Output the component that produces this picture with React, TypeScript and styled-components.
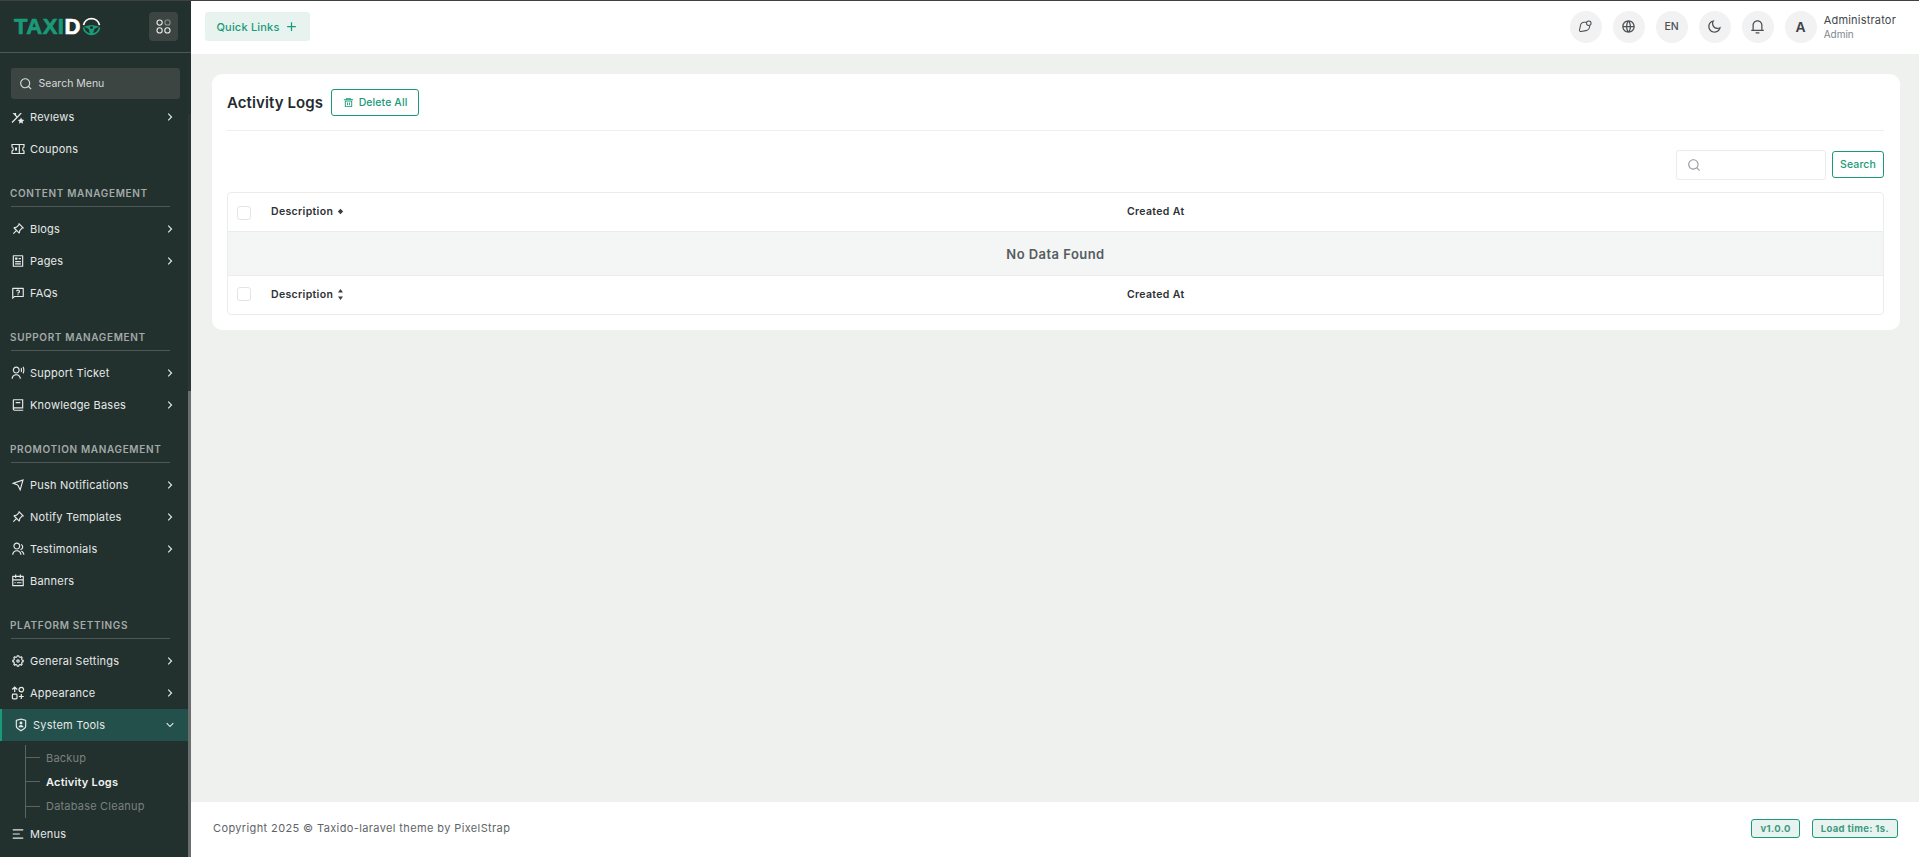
import React from "react";
import styled, { createGlobalStyle } from "styled-components";
import {
  RiAddLine, RiArrowDownSLine, RiArrowRightSLine, RiArticleLine, RiBook2Line, RiCalendarTodoLine,
  RiDeleteBin5Line, RiGlobalLine, RiMenu2Line, RiMoonLine, RiNotification3Line, RiPushpinLine,
  RiQuestionnaireLine, RiSearchLine, RiSendPlaneLine, RiSettings5Line, RiShieldUserLine,
  RiUserVoiceLine, RiGroupLine,
} from "react-icons/ri";

const PRIMARY = "#199a78";

const Global = createGlobalStyle`
  html, body { margin: 0; padding: 0; height: 100%; overflow: hidden; }
  body { font-family: Inter, "Liberation Sans", sans-serif; background: #eff1ef; }
  * { box-sizing: border-box; }
`;

const Page = styled.div`
  display: flex; height: 857px; width: 1919px; border-top: 1px solid #3f4241; overflow: hidden;
`;
const Sidebar = styled.aside`
  position: relative; width: 191px; flex: none; background: #22302e; display: flex; flex-direction: column; overflow: hidden;
`;
const Brand = styled.div`
  height: 52px; flex: none; padding: 0 13px 0 14px; display: flex; align-items: center; justify-content: space-between;
  border-bottom: 1px solid #4e5856;
`;
const Logo = styled.div`
  display: flex; align-items: center; font-family: "Liberation Sans", Arial, sans-serif; font-weight: 700; font-size: 22px; letter-spacing: .5px; line-height: 1; color: ${PRIMARY};
  -webkit-text-stroke: .7px currentColor;
  span { color: #fff; }
  svg { margin-left: 1px; }
`;
const SquareButton = styled.div`
  width: 29px; height: 29px; border-radius: 4px; background: #3d4543; display: flex; align-items: center; justify-content: center;
`;
const SearchBox = styled.div`
  margin: 15px 0 0 11px; width: 169px; height: 31px; flex: none; border-radius: 3px; background: #3d4543; color: #d5d9d8;
  display: flex; align-items: center; gap: 6px; padding-left: 8px; font-size: 10.5px; font-weight: 400;
  svg { font-size: 13.5px; }
`;
const NavViewport = styled.nav`
  margin-top: 14px; flex: 1; overflow: hidden; width: 188px;
`;
const NavList = styled.div`
  margin-top: -12px; display: flex; flex-direction: column;
`;
const SectionLabel = styled.div`
  margin: 0 0 6px 11px; padding-top: 22px; width: 159px; height: 42px; border-bottom: 1px solid #4e5856; text-indent: -1px;
  font-size: 10px; font-weight: 600; letter-spacing: .65px; color: #a3aaa8; white-space: nowrap; line-height: 13px;
`;
const Row = styled.div<{ $active?: boolean }>`
  height: 32px; flex: none; display: flex; align-items: center; gap: 5px; font-size: 11px; font-weight: 400; letter-spacing: .22px;
  color: #e6e9e8; white-space: nowrap;
  padding: 0 15px 0 ${(p) => (p.$active ? "12px" : "11px")};
  background: ${(p) => (p.$active ? "#23504a" : "transparent")};
  border-left: ${(p) => (p.$active ? `2px solid ${PRIMARY}` : "0")};
  > svg:first-child { font-size: 14px; flex: none; }
  > span { flex: 1; padding-bottom: 1px; }
  > svg:last-child { font-size: 14px; margin-right: -4px; }
`;
const SubList = styled.div`
  margin: 4px 0 0 25px; border-left: 1px solid #5b6462; display: flex; flex-direction: column; height: 73px;
`;
const SubItem = styled.div<{ $active?: boolean }>`
  position: relative; height: 24.5px; display: flex; align-items: center; padding-left: 20px; font-size: 11px; letter-spacing: .2px;
  font-weight: ${(p) => (p.$active ? 600 : 400)}; color: ${(p) => (p.$active ? "#f0f2f1" : "#7a827f")};
  padding-top: 1px;
  &::before { content: ""; position: absolute; left: 0; top: 50%; width: 14px; height: 1px; background: #5b6462; }
`;
const ScrollTrack = styled.div`
  position: absolute; right: 0; top: 113px; bottom: 0; width: 3px; background: #2b3735;
`;
const ScrollThumb = styled.div`
  position: absolute; right: 0; top: 277px; bottom: 0; width: 100%; background: #6a6f6e;
`;
const Main = styled.div`
  flex: 1; min-width: 0; display: flex; flex-direction: column; background: #eff1ef;
`;
const Header = styled.header`
  height: 53px; flex: none; background: #fff; display: flex; align-items: center; justify-content: space-between; padding: 0 23px 2px 14px;
`;
const QuickLinks = styled.div`
  width: 105px; height: 29px; border-radius: 3px; background: #e8f3f0; color: ${PRIMARY}; display: flex; align-items: center; justify-content: center; gap: 4px;
  font-size: 11px; font-weight: 500; letter-spacing: .2px;
  svg { font-size: 15px; }
`;
const HeaderRight = styled.div`
  display: flex; align-items: center; gap: 11px;
`;
const Circle = styled.div`
  width: 32px; height: 32px; border-radius: 50%; background: #f2f2f2; color: #4b5155; display: flex; align-items: center; justify-content: center;
  font-size: 10.5px; font-weight: 500;
  svg { font-size: 15px; }
`;
const Avatar = styled(Circle)`
  font-size: 14px; font-weight: 700; color: #3d4347; font-family: "Liberation Sans", sans-serif;
`;
const UserBlock = styled.div`
  margin-left: -4px; display: flex; flex-direction: column; gap: 2px; line-height: 12px;
`;
const UserName = styled.div`
  font-size: 11px; font-weight: 400; color: #41474b; letter-spacing: .2px;
`;
const UserRole = styled.div`
  font-size: 10px; color: #80868a;
`;
const Content = styled.main`
  flex: 1; min-height: 0; padding: 20px 19px 0 21px;
`;
const Card = styled.section`
  height: 256px; border-radius: 10px; background: #fff; padding: 15px 16px 0 15px;
`;
const TitleRow = styled.div`
  height: 42px; border-bottom: 1px solid #eeeeee; display: flex; align-items: flex-start; gap: 8px;
`;
const Title = styled.h1`
  margin: 0; font-size: 15px; font-weight: 600; line-height: 27px; color: #252b2f; letter-spacing: .1px;
`;
const OutlineButton = styled.button`
  font-family: inherit; height: 27px; border: 1px solid ${PRIMARY}; border-radius: 3px; background: #fff; color: ${PRIMARY}; font-size: 10.5px; font-weight: 500;
  display: flex; align-items: center; gap: 5px; padding: 0 10.5px; letter-spacing: .1px;
  svg { font-size: 11px; }
`;
const Toolbar = styled.div`
  height: 61px; display: flex; justify-content: flex-end; align-items: flex-start; padding-top: 20px; gap: 6px;
`;
const SearchInput = styled.div`
  width: 150px; height: 30px; margin-top: -1px; border: 1px solid #ececec; border-radius: 3px; color: #9aa0a6; display: flex; align-items: center; padding-left: 10px;
  svg { font-size: 14px; }
`;
const SearchBtn = styled(OutlineButton)`
  width: 52px; padding: 0; justify-content: center; font-size: 10.5px;
`;
const Table = styled.div`
  border: 1px solid #ececec; border-radius: 4px; overflow: hidden;
`;
const HeadRow = styled.div`
  height: 38px; display: grid; grid-template-columns: 899px 1fr; align-items: center; padding-bottom: 2px; font-size: 10.5px; font-weight: 600; color: #2c3236; letter-spacing: .33px;
`;
const EmptyRow = styled.div`
  height: 45px; background: #f4f6f5; border-top: 1px solid #ececec; border-bottom: 1px solid #ececec; display: flex; align-items: center; justify-content: center;
  font-size: 13px; font-weight: 600; color: #565c60; letter-spacing: .45px;
`;
const DescCell = styled.div`
  display: flex; align-items: center; padding-left: 9px;
`;
const Checkbox = styled.span<{ $drop: number }>`
  width: 14px; height: 14px; border: 1px solid #e2e4e6; border-radius: 3px; margin-right: 20px; margin-top: ${(p) => p.$drop}px; background: #fff;
`;
const Sort = styled.svg`
  margin-left: 4px;
`;
const CreatedCell = styled.div``;
const Footer = styled.footer`
  height: 55px; flex: none; background: #fff; display: flex; align-items: center; justify-content: space-between; padding: 0 21px 3px 22px; font-size: 11px; color: #5e6468; letter-spacing: .38px;
`;
const Badges = styled.div`
  display: flex; gap: 12px;
`;
const Badge = styled.div`
  height: 19px; display: flex; align-items: center; padding: 0 8px; border: 1px solid ${PRIMARY}; border-radius: 3px; background: #e8f3f0; color: #3f9a80; font-size: 9.5px; font-weight: 700; letter-spacing: .35px;
`;

const Wheel = () => (
  <svg width="19" height="19" viewBox="0 0 20 20" fill="none">
    <path d="M1.6 8.5A8.6 8.6 0 0 1 18.4 8.5" stroke="#fff" strokeWidth="1.8" />
    <path d="M1.5 11A8.6 8.6 0 0 0 18.5 11" stroke="#199a78" strokeWidth="1.8" />
    <path d="M2 10 L7 9 Q10 7.8 13 9 L18 10 L13 12.5 L11.5 18 H8.5 L7 12.5 Z" fill="#199a78" />
    <circle cx="10" cy="11" r="1.6" fill="#22302e" />
  </svg>
);
const Grid = () => (
  <svg width="15" height="15" viewBox="0 0 15 15" fill="none" strokeWidth="1.1">
    <circle cx="3.6" cy="3.6" r="2.6" stroke="#e8eaea" />
    <rect x="9" y="1" width="5" height="5" rx="2" stroke="#8d9391" />
    <circle cx="3.6" cy="11.4" r="2.6" stroke="#e8eaea" />
    <circle cx="11.4" cy="11.4" r="2.6" stroke="#e8eaea" />
  </svg>
);
const Planet = () => (
  <svg width="15" height="15" viewBox="0 0 16 16" fill="none" stroke="currentColor" strokeWidth="1.1">
    <circle cx="11.5" cy="4.5" r="2.4" />
    <path d="M9.3 3.5H6.5C4.3 3.5 3 5 2.6 7L1.6 11.6C1.4 12.7 2.2 13.5 3.3 13.3L8.5 12.4C10.8 12 12.2 10.3 12.4 8L12.6 6.8" />
  </svg>
);
const ReviewsIcon = () => (
  <svg width="14" height="14" viewBox="0 0 14 14" fill="none" stroke="currentColor" strokeWidth="1.2">
    <path d="M1 12.5 7 6.5 11 2M1.5 2 4.5 2 4.5 5M1.5 2 6 7" />
    <path d="M10 7.5 11 9.6 13.3 10 11.6 11.5 12 13.7 10 12.6 8 13.7 8.4 11.5 6.7 10 9 9.6Z" fill="currentColor" stroke="none" />
  </svg>
);
const CouponIcon = () => (
  <svg width="14" height="14" viewBox="0 0 14 14" fill="none" stroke="currentColor" strokeWidth="1.2">
    <path d="M1 2.5H13V5C12 5.3 11.7 6 11.7 7S12 8.7 13 9V11.5H1V9C2 8.7 2.3 8 2.3 7S2 5.3 1 5Z" />
    <path d="M8.3 2.5V11.5" />
    <path d="M4 5.5H6V8.5H4Z" fill="currentColor" stroke="none" />
  </svg>
);
const AppearanceIcon = () => (
  <svg width="14" height="14" viewBox="0 0 14 14" fill="none" stroke="currentColor" strokeWidth="1.2">
    <path d="M3.7 1V6M1.2 3.5 3.7 1 6.2 3.5" />
    <circle cx="10.3" cy="3.6" r="2.3" />
    <rect x="1.4" y="8.2" width="4.6" height="4.6" rx=".8" />
    <path d="M10.3 8V13M7.8 10.5H12.8" />
  </svg>
);
const SortBoth = () => (
  <Sort width="7" height="13" viewBox="0 0 7 13"><path d="M3.5 1 6 4.5H1Z" fill="#3a4044" /><path d="M3.5 12 6 8.5H1Z" fill="#3a4044" /></Sort>
);
const SortDot = () => (
  <Sort width="7" height="7" viewBox="0 0 7 7"><path d="M3.5 .8 6.2 3.5 3.5 6.2 .8 3.5Z" fill="#3a4044" /></Sort>
);

type Item = { icon: React.ComponentType; label: string; arrow?: boolean };
const groups: { title?: string; items: Item[] }[] = [
  { items: [{ icon: ReviewsIcon, label: "Reviews", arrow: true }, { icon: CouponIcon, label: "Coupons" }] },
  { title: "CONTENT MANAGEMENT", items: [
    { icon: RiPushpinLine, label: "Blogs", arrow: true },
    { icon: RiArticleLine, label: "Pages", arrow: true },
    { icon: RiQuestionnaireLine, label: "FAQs" } ] },
  { title: "SUPPORT MANAGEMENT", items: [
    { icon: RiUserVoiceLine, label: "Support Ticket", arrow: true },
    { icon: RiBook2Line, label: "Knowledge Bases", arrow: true } ] },
  { title: "PROMOTION MANAGEMENT", items: [
    { icon: RiSendPlaneLine, label: "Push Notifications", arrow: true },
    { icon: RiPushpinLine, label: "Notify Templates", arrow: true },
    { icon: RiGroupLine, label: "Testimonials", arrow: true },
    { icon: RiCalendarTodoLine, label: "Banners" } ] },
  { title: "PLATFORM SETTINGS", items: [
    { icon: RiSettings5Line, label: "General Settings", arrow: true },
    { icon: AppearanceIcon, label: "Appearance", arrow: true } ] },
];

export default function App() {
  return (
    <>
      <Global />
      <Page>
        <Sidebar>
          <Brand>
            <Logo>TAXI<span>D</span><Wheel /></Logo>
            <SquareButton><Grid /></SquareButton>
          </Brand>
          <SearchBox><RiSearchLine />Search Menu</SearchBox>
          <NavViewport>
            <NavList>
              {groups.map((g, i) => (
                <React.Fragment key={i}>
                  {g.title && <SectionLabel>{g.title}</SectionLabel>}
                  {g.items.map((it) => {
                    const I = it.icon;
                    return (
                      <Row key={it.label}><I /><span>{it.label}</span>{it.arrow && <RiArrowRightSLine />}</Row>
                    );
                  })}
                </React.Fragment>
              ))}
              <Row $active><RiShieldUserLine /><span>System Tools</span><RiArrowDownSLine /></Row>
              <SubList>
                <SubItem>Backup</SubItem>
                <SubItem $active>Activity Logs</SubItem>
                <SubItem>Database Cleanup</SubItem>
              </SubList>
              <Row><RiMenu2Line /><span>Menus</span></Row>
            </NavList>
          </NavViewport>
          <ScrollTrack><ScrollThumb /></ScrollTrack>
        </Sidebar>
        <Main>
          <Header>
            <QuickLinks>Quick Links <RiAddLine /></QuickLinks>
            <HeaderRight>
              <Circle><Planet /></Circle>
              <Circle><RiGlobalLine /></Circle>
              <Circle>EN</Circle>
              <Circle><RiMoonLine /></Circle>
              <Circle><RiNotification3Line /></Circle>
              <Avatar>A</Avatar>
              <UserBlock><UserName>Administrator</UserName><UserRole>Admin</UserRole></UserBlock>
            </HeaderRight>
          </Header>
          <Content>
            <Card>
              <TitleRow>
                <Title>Activity Logs</Title>
                <OutlineButton><RiDeleteBin5Line />Delete All</OutlineButton>
              </TitleRow>
              <Toolbar>
                <SearchInput><RiSearchLine /></SearchInput>
                <SearchBtn>Search</SearchBtn>
              </Toolbar>
              <Table>
                <HeadRow>
                  <DescCell><Checkbox $drop={4} />Description<SortDot /></DescCell>
                  <CreatedCell>Created At</CreatedCell>
                </HeadRow>
                <EmptyRow>No Data Found</EmptyRow>
                <HeadRow>
                  <DescCell><Checkbox $drop={0} />Description<SortBoth /></DescCell>
                  <CreatedCell>Created At</CreatedCell>
                </HeadRow>
              </Table>
            </Card>
          </Content>
          <Footer>
            <div>Copyright 2025 © Taxido-laravel theme by PixelStrap</div>
            <Badges><Badge>v1.0.0</Badge><Badge>Load time: 1s.</Badge></Badges>
          </Footer>
        </Main>
      </Page>
    </>
  );
}
